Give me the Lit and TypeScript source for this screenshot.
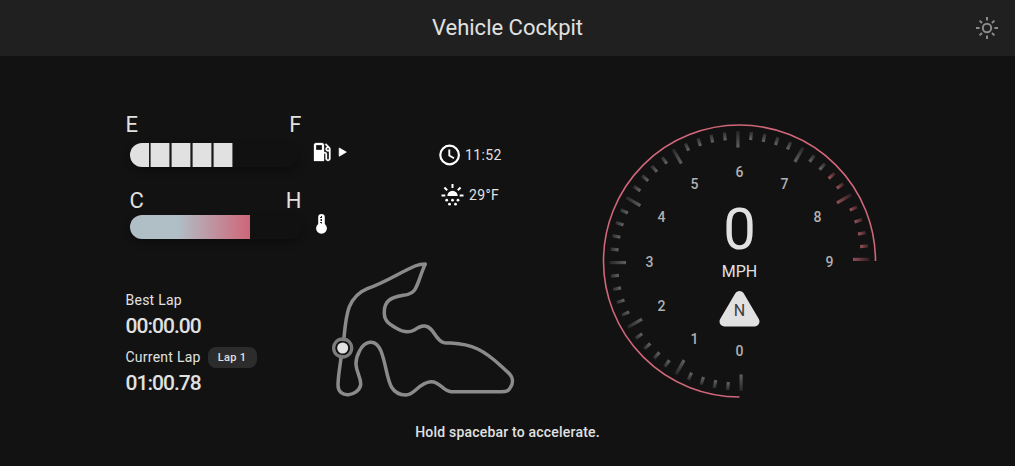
import { LitElement, html, svg, css } from "lit";
import { customElement, state } from "lit/decorators.js";

@customElement("level-gauge")
class LevelGauge extends LitElement {
  static properties = { low: {}, high: {}, kind: {} };
  declare low: string;
  declare high: string;
  declare kind: string;

  static styles = css`
    :host { display: block; width: 176px; }
    .labels { display: flex; justify-content: space-between; font-size: 22px; line-height: 26px; height: 31px; color: #e1e1e1; }
    .labels.temp { padding-left: 4px; height: 27px; }
    .bar { margin-left: 4px; height: 24px; border-radius: 12px; overflow: hidden; box-shadow: 0 4px 8px rgba(0, 0, 0, 0.3); background: #111; }
    .bar.fuel { width: 168px; }
    .bar.temp { width: 172px; }
    .fill { height: 24px; }
    .fill.fuel { width: 103px; background: repeating-linear-gradient(90deg, #e1e1e1 0 18.6px, #666 18.6px 19.3px, #191919 19.3px 20.3px, #666 20.3px 20.9px); }
    .fill.temp { width: 120.5px; background: linear-gradient(90deg, #b0bec5 40%, #cf6679); }
  `;

  render() {
    return html`
      <div class="labels ${this.kind}"><span>${this.low}</span><span>${this.high}</span></div>
      <div class="bar ${this.kind}"><div class="fill ${this.kind}"></div></div>
    `;
  }
}

@customElement("speed-dial")
class SpeedDial extends LitElement {
  @state() speed = 0;
  @state() gear = "N";

  static styles = css`
    :host { display: block; width: 280px; height: 280px; }
    svg { display: block; font-family: Roboto, sans-serif; text-anchor: middle; }
    .arc { fill: none; stroke: #cf6679; stroke-width: 1.6; }
    .num { font-size: 14px; font-weight: 500; fill: #b0b0b0; }
    .speed { font-size: 58px; fill: #e1e1e1; }
    .unit { font-size: 16px; fill: #e1e1e1; }
    .cone { fill: #e1e1e1; stroke: #e1e1e1; stroke-width: 10; stroke-linejoin: round; }
    .gear { font-size: 16px; fill: #3c3c3c; }
  `;

  render() {
    const ticks = Array.from({ length: 46 }, (_, i) => i);
    const nums = Array.from({ length: 10 }, (_, i) => i);
    return html`<svg width="280" height="280" viewBox="-139.5 -140 280 280">
      <defs>
        <linearGradient id="grey" gradientUnits="userSpaceOnUse" x1="0" y1="113" x2="0" y2="130">
          <stop offset="0" stop-color="#616161" /><stop offset="1" stop-color="#262626" />
        </linearGradient>
        <linearGradient id="red" gradientUnits="userSpaceOnUse" x1="0" y1="113" x2="0" y2="130">
          <stop offset="0" stop-color="#96505b" /><stop offset="1" stop-color="#2d1c1f" />
        </linearGradient>
        <linearGradient id="greyMinor" gradientUnits="userSpaceOnUse" x1="0" y1="122" x2="0" y2="130">
          <stop offset="0" stop-color="#616161" /><stop offset="1" stop-color="#2b2b2b" />
        </linearGradient>
        <linearGradient id="redMinor" gradientUnits="userSpaceOnUse" x1="0" y1="122" x2="0" y2="130">
          <stop offset="0" stop-color="#96505b" /><stop offset="1" stop-color="#37201f" />
        </linearGradient>
      </defs>
      <path class="arc" d="M0 136A136 136 0 1 1 136 0" />
      ${ticks.map((i) => {
        const major = i % 5 === 0;
        const fill = (i >= 38 ? "red" : "grey") + (major ? "" : "Minor");
        return svg`<rect x="0" y=${major ? 113.5 : 121.5} width="3.2" height=${major ? 16.5 : 8} fill="url(#${fill})" transform="rotate(${i * 6})" />`;
      })}
      ${nums.map((n) => {
        const a = (n * 30 * Math.PI) / 180;
        return svg`<text class="num" x=${-90 * Math.sin(a)} y=${89.5 * Math.cos(a) + 5.5}>${n}</text>`;
      })}
      <text class="speed" x="0" y="-12.5">${this.speed}</text>
      <text class="unit" x="0" y="16">MPH</text>
      <path class="cone" d="M0 35L15 60.5H-15Z" />
      <text class="gear" x="0" y="55">${this.gear}</text>
    </svg>`;
  }
}

@customElement("app-root")
class AppRoot extends LitElement {
  static styles = css`
    :host { display: block; width: 1015px; height: 466px; overflow: hidden; background: #121212; color: #e1e1e1; font-family: Roboto, sans-serif; }
    svg { display: block; }
    header { display: grid; grid-template-columns: 1fr auto 1fr; align-items: center; height: 56px; padding: 0 16px; background: #202020; }
    h1 { grid-column: 2; margin: 0; font-size: 22px; font-weight: 400; line-height: 28px; }
    .theme { justify-self: end; }
    main { display: flex; height: 358px; padding-left: 125.5px; }
    .left { width: 474.5px; padding-top: 56px; }
    .top { display: flex; height: 138px; }
    .gauges { width: 313.5px; }
    .row { display: flex; height: 76px; }
    .fuel-icon { display: flex; align-items: center; height: 24px; margin: 28px 0 0 8.3px; }
    .temp-icon { margin: 25px 0 0 13.5px; }
    .info { display: flex; flex-direction: column; gap: 16px; padding-top: 31px; font-size: 14px; line-height: 24px; letter-spacing: 0.35px; }
    .line { display: flex; align-items: center; gap: 4px; height: 24px; }
    .bottom { display: flex; }
    .laps { width: 194.5px; padding-top: 40px; font-size: 14px; letter-spacing: 0.25px; }
    .label { display: flex; align-items: center; height: 20px; gap: 7px; }
    .time { height: 37px; line-height: 33px; font-size: 21px; font-weight: 500; letter-spacing: -0.98px; }
    .chip { padding: 0 10.2px; border-radius: 8px; background: #2c2c2c; font-size: 11px; font-weight: 500; line-height: 21px; letter-spacing: 0.3px; }
    .right { padding-top: 65px; }
    .hint { text-align: center; font-size: 14px; font-weight: 500; line-height: 20px; letter-spacing: 0.2px; margin: 8px 0 0; }
  `;

  render() {
    return html`
      <header>
        <h1>Vehicle Cockpit</h1>
        <svg class="theme" width="24" height="24" viewBox="0 0 24 24" fill="none" stroke="#8b8b8b" stroke-width="2">
          <circle cx="12" cy="12" r="4.2" />
          <path d="M12 1V4.6M12 19.4V23M1 12H4.6M19.4 12H23M4.6 4.6L7 7M17 17L19.4 19.4M4.6 19.4L7 17M17 7L19.4 4.6" />
        </svg>
      </header>
      <main>
        <section class="left">
          <div class="top">
            <div class="gauges">
              <div class="row">
                <level-gauge low="E" high="F" kind="fuel"></level-gauge>
                <div class="fuel-icon">
                  <svg width="24" height="24" viewBox="0 0 24 24" fill="#fff" stroke="#fff" stroke-width=".3">
                    <path d="M19.77 7.23l.01-.01-3.72-3.72L15 4.56l2.11 2.11c-.94.36-1.61 1.26-1.61 2.33 0 1.38 1.12 2.5 2.5 2.5.36 0 .69-.08 1-.21v7.21c0 .55-.45 1-1 1s-1-.45-1-1V14c0-1.1-.9-2-2-2h-1V5c0-1.1-.9-2-2-2H6c-1.1 0-2 .9-2 2v16h10v-7.5h1.5v5c0 1.38 1.12 2.5 2.5 2.5s2.5-1.12 2.5-2.5V9c0-.69-.28-1.32-.73-1.77zM12 10H6V5h6v5zm6 0c-.55 0-1-.45-1-1s.45-1 1-1 1 .45 1 1-.45 1-1 1z" />
                  </svg>
                  <svg width="16" height="16" viewBox="0 0 16 16" fill="#fff" stroke="#fff" stroke-width=".8" stroke-linejoin="round"><path d="M5.2 4V12.2L12.3 8.1Z" /></svg>
                </div>
              </div>
              <div class="row">
                <level-gauge low="C" high="H" kind="temp"></level-gauge>
                <svg class="temp-icon" width="13" height="22" viewBox="0 0 13 22">
                  <path fill="#fff" d="M3.2 4.2a3.3 3.3 0 0 1 6.6 0V11a5.4 5.4 0 1 1-6.6 0Z" />
                  <path stroke="#121212" d="M5 4.5H8M5 7H8M5 9.5H8M6.5 3V10.5" stroke-width=".9" stroke-dasharray="2 1" />
                </svg>
              </div>
            </div>
            <div class="info">
              <div class="line">
                <svg width="22" height="22" viewBox="0 0 22 22" fill="none" stroke="#fff" stroke-width="2.2">
                  <circle cx="10.6" cy="11" r="9.3" /><path d="M10.3 5.5V11.5L15 14.3" stroke-width="1.9" />
                </svg>
                <span>11:52</span>
              </div>
              <div class="line">
                <svg width="26" height="24" viewBox="0 0 26 24" fill="#fff">
                  <path d="M8.3 13a5.2 5.2 0 0 1 10.4 0Z" />
                  <path fill="none" stroke="#fff" stroke-width="2" d="M13.5 1V5M2.5 12.5H6.3M20.7 12.5H24.5M5.4 4.5L8.2 7.3M21.6 4.5L18.8 7.3" />
                  <circle cx="7.7" cy="17.2" r="1.4" /><circle cx="13.5" cy="17.2" r="1.4" /><circle cx="19" cy="17.2" r="1.4" />
                  <circle cx="10.5" cy="21.2" r="1.4" /><circle cx="16.5" cy="21.2" r="1.4" />
                </svg>
                <span>29°F</span>
              </div>
            </div>
          </div>
          <div class="bottom">
            <div class="laps">
              <div class="label">Best Lap</div>
              <div class="time">00:00.00</div>
              <div class="label">Current Lap <span class="chip">Lap 1</span></div>
              <div class="time">01:00.78</div>
            </div>
            <svg width="210" height="160" viewBox="0 0 630 480">
              <path fill="none" stroke="#8b8b8b" stroke-width="10.5" stroke-linejoin="round"
                d="M69 292C75 240 75 205 88 170C100 143 117 126 142 116C200 95 235 70 285 48C300 42 306 42 316 42C308 58 302 78 295 96C287 117 282 129 264 133C240 138 222 139 208 150C196 159 192 174 193 192C194 213 206 221 228 234C246 245 264 251 283 240C296 231 302 227 315 228C344 232 344 272 373 278C405 281 430 278 473 297C515 317 536 343 564 367C580 381 580 398 572 411C566 423 560 425 544 425H394C368 425 362 394 333 395C294 398 286 435 257 435C197 433 208 369 183 303C166 263 133 273 118 304C92 353 125 375 122 405C114 440 54 448 54 405C55 365 63 340 66 292" />
              <circle cx="68" cy="294" r="27" fill="none" stroke="#7c7c7c" stroke-width="10" />
              <circle cx="68" cy="294" r="21" fill="#121212" />
              <circle cx="68" cy="294" r="16.5" fill="#e1e1e1" />
            </svg>
          </div>
        </section>
        <section class="right"><speed-dial></speed-dial></section>
      </main>
      <p class="hint">Hold spacebar to accelerate.</p>
    `;
  }
}
